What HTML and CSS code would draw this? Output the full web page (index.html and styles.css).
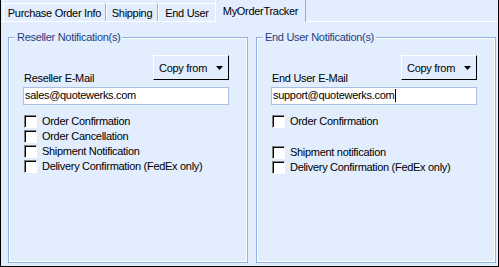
FILE: index.html
```
<!DOCTYPE html>
<html lang="en">
<head>
  <meta charset="UTF-8" />
  <title>MyOrderTracker</title>
  <link rel="stylesheet" href="styles.css">
</head>
<body>

  <div class="window">
    <!-- Pestañas -->
    <div class="tabs">
      <div class="tab tab-po">Purchase Order Info</div>
      <div class="tab tab-ship">Shipping</div>
      <div class="tab tab-user">End User</div>
      <div class="tab tab-tracker">MyOrderTracker</div>
    </div>

    <div class="panel">
      <fieldset class="group">
        <legend>Reseller Notification(s)</legend>
        <div class="head">
          <label>Reseller E-Mail</label>
          <button class="copy">Copy from
            <svg width="7" height="4" viewBox="0 0 7 4"><polygon points="0,0 7,0 3.5,4" fill="#000"/></svg>
          </button>
        </div>
        <div class="field">sales@quotewerks.com</div>
        <ul class="checks">
          <li><span class="box"></span>Order Confirmation</li>
          <li><span class="box"></span>Order Cancellation</li>
          <li><span class="box"></span>Shipment Notification</li>
          <li><span class="box"></span>Delivery Confirmation (FedEx only)</li>
        </ul>
      </fieldset>

      <fieldset class="group">
        <legend>End User Notification(s)</legend>
        <div class="head">
          <label>End User E-Mail</label>
          <button class="copy">Copy from
            <svg width="7" height="4" viewBox="0 0 7 4"><polygon points="0,0 7,0 3.5,4" fill="#000"/></svg>
          </button>
        </div>
        <div class="field">support@quotewerks.com<span class="caret"></span></div>
        <ul class="checks">
          <li><span class="box"></span>Order Confirmation</li>
          <li class="spacer"></li>
          <li><span class="box"></span>Shipment notification</li>
          <li><span class="box"></span>Delivery Confirmation (FedEx only)</li>
        </ul>
      </fieldset>
    </div>
  </div>

</body>
</html>
```

FILE: styles.css
```
body {
  margin: 0;
  font-family: "Liberation Sans", Arial, sans-serif;
  font-size: 11px;
  letter-spacing: -0.3px;
  color: #000;
}

.window {
  width: 499px;
  height: 267px;
  box-sizing: border-box;
  border: 1px solid #000;
  border-top: 0;
  background: #e2edfe;
  display: flex;
  flex-direction: column;
}

/* tabs */
.tabs {
  display: flex;
  height: 21px;
  padding-left: 2px;
  flex-shrink: 0;
}

.tab {
  box-sizing: border-box;
  margin-top: 3px;
  height: 18px;
  padding-top: 3px;
  line-height: 13px;
  text-align: center;
  white-space: nowrap;
  border-top: 1px solid #fff;
  border-left: 1px solid #fff;
  border-right: 1px solid #8db2e3;
}

.tab-po { width: 103px; }
.tab-ship { width: 52px; }
.tab-user { width: 57px; border-right: 0; }

.tab-tracker {
  width: 91px;
  margin-top: 0;
  height: 22px;
  padding-top: 5px;
  border-top: 0;
  position: relative;
  z-index: 1;
  background: #e2edfe;
}

/* panel */
.panel {
  flex: 1;
  border-top: 1px solid #fff;
  display: flex;
  gap: 8px;
  padding: 9px 2px 3px 7px;
}

.group {
  flex: 1;
  min-width: 0;
  margin: 0;
  padding: 11px 18px 0 14px;
  border: 1px solid #8db2e3;
  box-shadow: inset 0 0 0 1px #fff;
}

.group legend {
  margin-left: -8px;
  padding: 0 2px;
  line-height: 13px;
  color: #1f3f80;
  background: #e2edfe;
}

.head {
  display: flex;
  justify-content: space-between;
  height: 30px;
}

.head label {
  margin-top: 17px;
  padding-left: 1px;
  line-height: 13px;
}

.copy {
  box-sizing: border-box;
  width: 76px;
  height: 25px;
  padding: 0 0 0 5px;
  display: flex;
  align-items: center;
  gap: 9px;
  font: inherit;
  letter-spacing: inherit;
  color: #000;
  background: #e2edfe;
  border: 1px solid;
  border-color: #fff #000 #000 #fff;
}

.field {
  margin-top: 2px;
  height: 18px;
  box-sizing: border-box;
  padding: 1px 3px 0 1px;
  line-height: 13px;
  background: #fff;
  border: 1px solid #a9bfe3;
  white-space: nowrap;
}

.caret {
  display: inline-block;
  width: 1px;
  height: 13px;
  margin-left: 1px;
  background: #000;
  vertical-align: top;
}

.checks {
  list-style: none;
  margin: 9px 0 0;
  padding: 0 0 0 1px;
}

.checks li {
  display: flex;
  align-items: center;
  gap: 5px;
  height: 15px;
  line-height: 15px;
}

.checks .spacer {
  height: 16px;
}

.box {
  width: 13px;
  height: 13px;
  box-sizing: border-box;
  background: #fff;
  border: 1px solid;
  border-color: #808080 #fff #fff #808080;
  box-shadow: inset 1px 1px 0 #000;
}
```
